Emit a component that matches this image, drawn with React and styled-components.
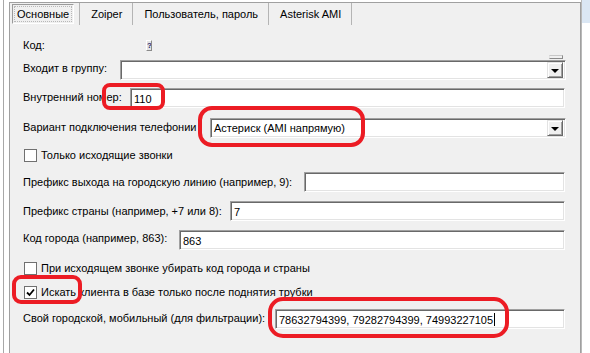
import React from "react";
import styled, { createGlobalStyle, css } from "styled-components";

const GlobalStyle = createGlobalStyle`
  html, body { margin: 0; padding: 0; background: #fff; }
  body {
    font-family: "Liberation Sans", Arial, sans-serif;
    font-size: 11px;
    color: #000;
  }
`;

const Screen = styled.div`
  position: relative;
  width: 590px;
  height: 353px;
  display: flex;
  overflow: hidden;
  background: #fff;
`;

const LeftGutter = styled.div`
  width: 9px;
  flex: none;
  background: linear-gradient(to right, #fff 3px, #a8a8a8 3px, #a8a8a8 4px, #fff 4px);
`;

const RightGutter = styled.div`
  flex: 1;
  border-left: 1px solid #b9b9b9;
  background: linear-gradient(#dbe7f4 0, #dbe7f4 23px, #fff 23px);
`;

const Panel = styled.div`
  width: 572px;
  flex: none;
  box-sizing: border-box;
  margin-top: 2px;
  border: 1px solid #a0a0a0;
  border-bottom: none;
  background: #f0f0f0;
  display: flex;
  flex-direction: column;
`;

const TabBar = styled.div`
  display: flex;
  height: 22px;
  align-items: stretch;
`;

const Tab = styled.div`
  display: flex;
  align-items: center;
  border-right: 1px solid #b4b4b4;
  white-space: nowrap;
  ${(p) =>
    p.$active
      ? css`
          padding: 1px 5px 1px 2px;
        `
      : css`
          padding: 0 10px 0 11px;
        `}
`;

const TabFace = styled.div`
  display: flex;
  align-items: center;
  height: 100%;
  box-sizing: border-box;
  padding: 0 4px;
  border: 1px solid;
  border-color: #9a9a9a #ffffff #ffffff #9a9a9a;
  outline: 1px dotted #b8b8b8;
  outline-offset: -3px;
`;

const Form = styled.div`
  display: flex;
  flex-direction: column;
  padding: 0 14px 0 13px;
`;

const Row = styled.div`
  display: flex;
  align-items: center;
  height: ${(p) => p.$h || 20}px;
  margin-top: ${(p) => p.$mt}px;
`;

const Label = styled.div`
  width: ${(p) => p.$w}px;
  flex: none;
  white-space: nowrap;
  ${(p) => p.$dy && css`position: relative; top: ${p.$dy}px;`}
`;

const sunken = css`
  box-sizing: border-box;
  height: 20px;
  background: #fff;
  border: 1px solid;
  border-color: #a0a0a0 #ffffff #ffffff #a0a0a0;
  box-shadow: inset 1px 1px 0 #696969, inset -1px -1px 0 #e3e3e3;
`;

const TextField = styled.div`
  ${sunken}
  flex: 1;
  margin-right: 1px;
  display: flex;
  align-items: center;
  padding: 1px 3px 0;
  white-space: nowrap;
`;

const Combo = styled.div`
  ${sunken}
  flex: 1;
  display: flex;
  align-items: center;
  padding: 2px 2px 2px 3px;
`;

const ComboText = styled.div`
  flex: 1;
  white-space: nowrap;
`;

const DropButton = styled.div`
  width: 16px;
  height: 16px;
  box-sizing: border-box;
  flex: none;
  background: #f0f0f0;
  border: 1px solid;
  border-color: #e3e3e3 #696969 #696969 #e3e3e3;
  box-shadow: inset 1px 1px 0 #fff, inset -1px -1px 0 #a0a0a0;
  display: flex;
  align-items: center;
  justify-content: center;
  &::after {
    content: "";
    border-left: 4px solid transparent;
    border-right: 4px solid transparent;
    border-top: 4px solid #000;
    margin-top: 1px;
  }
`;

const HelpButton = styled.div`
  width: 6px;
  height: 11px;
  box-sizing: border-box;
  border: 1px solid;
  border-color: #fff #8a8a8a #8a8a8a #fff;
  background: #e4e4e4;
  font-size: 8px;
  font-weight: bold;
  line-height: 9px;
  color: #1c2a6e;
  text-align: center;
  overflow: hidden;
`;

const CheckRow = styled.label`
  display: flex;
  align-items: center;
  height: 16px;
  margin-top: ${(p) => p.$mt}px;
  padding-left: 1px;
  gap: 4px;
  white-space: nowrap;
`;

const CheckBox = styled.span`
  width: 13px;
  height: 13px;
  box-sizing: border-box;
  flex: none;
  border: 1px solid #707070;
  background: #fff;
  display: flex;
  align-items: center;
  justify-content: center;
`;

const Caret = styled.span`
  display: inline-block;
  width: 1px;
  height: 13px;
  background: #000;
  margin-left: 1px;
`;

const StubButton = styled.div`
  position: absolute;
  left: 549px;
  top: 55px;
  width: 14px;
  height: 4px;
  box-sizing: border-box;
  background: #f0f0f0;
  border: 1px solid;
  border-color: #e3e3e3 #8a8a8a #8a8a8a #e3e3e3;
  border-top-color: #c8c8c8;
`;

const Mark = styled.div`
  position: absolute;
  box-sizing: border-box;
  border: 4px solid #ec1c24;
  pointer-events: none;
`;

function Check({ checked }) {
  return (
    <CheckBox>
      {checked && (
        <svg width="9" height="9" viewBox="0 0 9 9">
          <path d="M1 4.5 L3.5 7 L8 1.5" fill="none" stroke="#000" strokeWidth="1.8" />
        </svg>
      )}
    </CheckBox>
  );
}

const marks = [
  { left: 102, top: 83, width: 63, height: 27, radius: 8 },
  { left: 198, top: 106, width: 167, height: 41, radius: 14 },
  { left: 12, top: 275, width: 70, height: 29, radius: 9 },
  { left: 268, top: 297, width: 241, height: 41, radius: 15 },
];

export default function App() {
  return (
    <>
      <GlobalStyle />
      <Screen>
        <LeftGutter />
        <Panel>
          <TabBar>
            <Tab $active>
              <TabFace>Основные</TabFace>
            </Tab>
            <Tab>Zoiper</Tab>
            <Tab>Пользователь, пароль</Tab>
            <Tab>Asterisk AMI</Tab>
          </TabBar>
          <Form>
            <Row $mt={10}>
              <Label $w={123}>Код:</Label>
              <HelpButton>?</HelpButton>
            </Row>
            <Row $mt={5}>
              <Label $w={97} $dy={-2}>Входит в группу:</Label>
              <Combo>
                <ComboText />
                <DropButton />
              </Combo>
            </Row>
            <Row $mt={8}>
              <Label $w={107} $dy={-1}>Внутренний номер:</Label>
              <TextField>110</TextField>
            </Row>
            <Row $mt={10}>
              <Label $w={187} $dy={-1}>Вариант подключения телефонии</Label>
              <Combo>
                <ComboText>Астериск (AMI напрямую)</ComboText>
                <DropButton />
              </Combo>
            </Row>
            <CheckRow $mt={9}>
              <Check />
              Только исходящие звонки
            </CheckRow>
            <Row $mt={9}>
              <Label $w={281}>Префикс выхода на городскую линию (например, 9):</Label>
              <TextField />
            </Row>
            <Row $mt={9}>
              <Label $w={207}>Префикс страны (например, +7 или 8):</Label>
              <TextField>7</TextField>
            </Row>
            <Row $mt={9}>
              <Label $w={156} $dy={-2}>Код города (например, 863):</Label>
              <TextField>863</TextField>
            </Row>
            <CheckRow $mt={10}>
              <Check />
              При исходящем звонке убирать код города и страны
            </CheckRow>
            <CheckRow $mt={8}>
              <Check checked />
              Искать клиента в базе только после поднятия трубки
            </CheckRow>
            <Row $mt={9}>
              <Label $w={252} $dy={-1}>Свой городской, мобильный (для фильтрации):</Label>
              <TextField>
                78632794399, 79282794399, 74993227105
                <Caret />
              </TextField>
            </Row>
          </Form>
        </Panel>
        <RightGutter />
        <StubButton />
        {marks.map((m, i) => (
          <Mark
            key={i}
            style={{
              left: m.left,
              top: m.top,
              width: m.width,
              height: m.height,
              borderRadius: m.radius,
            }}
          />
        ))}
      </Screen>
    </>
  );
}
